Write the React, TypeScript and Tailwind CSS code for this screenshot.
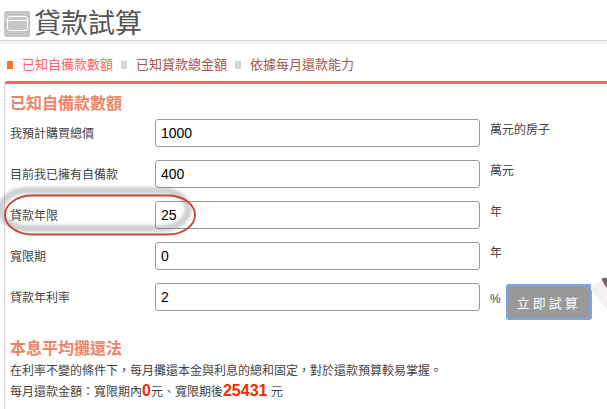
import { useState } from "react"

const tabs = ["已知自備款數額", "已知貸款總金額", "依據每月還款能力"]

const fields = [
  { id: "price", label: "我預計購買總價", value: "1000", unit: "萬元的房子" },
  { id: "down", label: "目前我已擁有自備款", value: "400", unit: "萬元" },
  { id: "years", label: "貸款年限", value: "25", unit: "年", marked: true },
  { id: "grace", label: "寬限期", value: "0", unit: "年" },
  { id: "rate", label: "貸款年利率", value: "2", unit: "%", submit: true },
]

function Marker() {
  return (
    <svg
      className="pointer-events-none absolute -left-3 -top-5 z-10"
      width="212"
      height="66"
      viewBox="0 0 212 66"
      fill="none"
    >
      <defs>
        <filter id="soft" x="-10%" y="-30%" width="120%" height="160%">
          <feGaussianBlur stdDeviation="1.8" />
        </filter>
      </defs>
      <rect x="3" y="9.5" width="187" height="38" rx="26" ry="19" stroke="#777" strokeOpacity="0.34" strokeWidth="7" filter="url(#soft)" />
      <rect x="7" y="14.5" width="190" height="39" rx="27" ry="19.5" stroke="#c04a33" strokeWidth="1.8" />
    </svg>
  )
}

export default function App() {
  const [active, setActive] = useState(0)
  const [values, setValues] = useState<Record<string, string>>(
    Object.fromEntries(fields.map((f) => [f.id, f.value]))
  )

  return (
    <div className="overflow-hidden bg-white font-['Liberation_Sans','Noto_Sans_CJK_TC',sans-serif] text-xs text-[#444]">
      <header className="flex h-10 items-center pl-1 pt-1">
        <svg className="mt-1" width="26" height="26" viewBox="0 0 26 26" fill="none">
          <rect width="26" height="26" rx="2" fill="#c6c6c6" />
          <rect x="3.5" y="5.5" width="20" height="14" rx="2.5" stroke="#fff" />
          <path d="M3.5 9.5h20" stroke="#fff" />
        </svg>
        <h1 className="pl-1 pt-1 text-[27px] leading-9 font-normal text-[#555]">貸款試算</h1>
      </header>
      <div className="h-1 border-t border-[#d5d5d5] bg-[#f2f2f2]" />

      <nav className="flex h-[37px] items-center gap-2 pl-[7px] pt-[5px] text-[13px]">
        {tabs.map((tab, i) => (
          <a
            key={tab}
            href="#"
            onClick={() => setActive(i)}
            className={`flex items-center gap-[9px] ${i === active ? "text-[#ff6666]" : "text-[#a65353]"}`}
          >
            <span className={`h-2 w-1.5 ${i === active ? "bg-[#f97524]" : "bg-[#d6d6d6]"}`} />
            {tab}
          </a>
        ))}
      </nav>

      <main className="relative ml-1 rounded-tl border-l border-t-3 border-l-[#d5d5d5] border-t-[#ff6464] pb-2 pl-[5px] pt-2">
        <h2 className="text-base leading-6 font-bold text-[#ee8468]">已知自備款數額</h2>

        <form className="mt-[3px] flex flex-col gap-[13px]" onSubmit={(e) => e.preventDefault()}>
          {fields.map((f) => (
            <div key={f.id} className="relative flex h-7 items-center">
              <label htmlFor={f.id} className="w-[145px] shrink-0 pt-0.5">
                {f.label}
              </label>
              <input
                id={f.id}
                type="text"
                value={values[f.id]}
                onChange={(e) => setValues({ ...values, [f.id]: e.target.value })}
                className="h-7 min-w-0 flex-1 rounded-[3px] border border-[#999] bg-white px-[5px] text-sm text-black"
              />
              <div className="flex w-[127px] shrink-0 items-center gap-[5px] pl-[10px]">
                <span className={f.submit ? "pt-1" : "pb-1.5"}>{f.unit}</span>
                {f.submit && (
                  <button
                    type="submit"
                    className="mt-2.5 h-9 w-[86px] rounded-[3px] border-2 border-[#79a3ea] bg-[#999] pt-1 text-[13px] tracking-[3px] text-white"
                  >
                    立即試算
                  </button>
                )}
              </div>
              {f.marked && <Marker />}
            </div>
          ))}
        </form>

        <svg className="absolute right-0 top-[192px]" width="16" height="36" viewBox="0 0 16 36">
          <path d="M0 9L11 5L16 8V34L0 14Z" fill="#f2f2f2" />
          <path d="M10.500 3Q12 1 16 2V12Q13 9 10.500 3Z" fill="#766868" />
        </svg>

        <section className="mt-[26px]">
          <h2 className="text-base leading-6 font-bold text-[#ee8468]">本息平均攤還法</h2>
          <p className="leading-[21px]">在利率不變的條件下，每月攤還本金與利息的總和固定，對於還款預算較易掌握。</p>
          <p className="leading-[21px]">
            每月還款金額：寬限期內<b className="text-base leading-none text-[#f32c05]">0</b>元、寬限期後
            <b className="text-base leading-none text-[#f32c05]">25431</b> 元
          </p>
        </section>
      </main>
    </div>
  )
}
